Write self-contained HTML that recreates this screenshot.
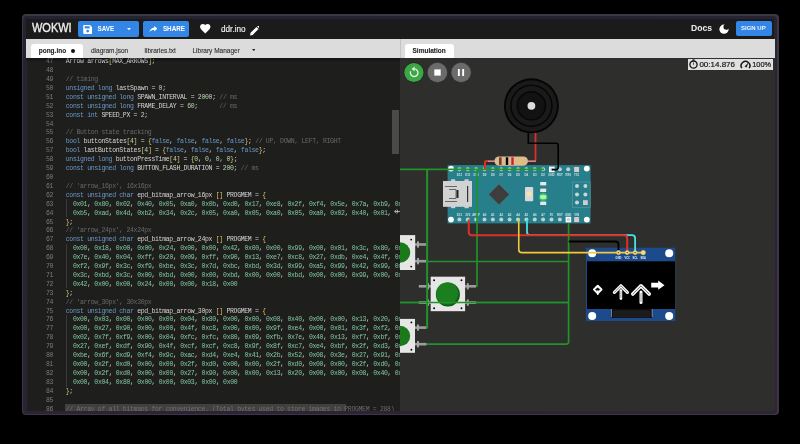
<!DOCTYPE html>
<html><head><meta charset="utf-8">
<style>
*{margin:0;padding:0;box-sizing:border-box}
html,body{width:800px;height:444px;background:#000;overflow:hidden;font-family:"Liberation Sans",sans-serif;-webkit-font-smoothing:antialiased}
#root{position:absolute;left:0;top:0;width:800px;height:444px;will-change:transform}
.a{position:absolute}
#win{position:absolute;left:21.5px;top:13.6px;width:757px;height:401.4px;background:linear-gradient(160deg,#3a3843,#3d3443);border-radius:4px}
#win2{position:absolute;left:23px;top:15.5px;width:754px;height:398px;background:linear-gradient(160deg,#252231,#2e2538);border-radius:4px}
#hdr{position:absolute;left:25.8px;top:19px;width:748.5px;height:19.6px;background:#1c1b1b}
#tabbar{position:absolute;left:25.8px;top:38.6px;width:374.2px;height:19.4px;background:#dcdcdc}
#simtabbar{position:absolute;left:400px;top:38.6px;width:374.5px;height:19.4px;background:#dcdcdc;border-left:0.8px solid #c4c4c4}
#code{position:absolute;left:25.8px;top:57.5px;width:374.2px;height:353.5px;background:#1e1e1d;overflow:hidden}
#sim{position:absolute;left:400px;top:57.5px;width:374.5px;height:353.5px;background:#2e2e2d;overflow:hidden}
.nums{position:absolute;left:0;top:0.7px;width:27.3px;text-align:right;font-family:"Liberation Mono",monospace;font-size:6.5px;letter-spacing:-0.33px;line-height:8.91px;color:#7a7a7a}
.lines{position:absolute;left:39.95px;top:0.7px;white-space:pre;font-family:"Liberation Mono",monospace;font-size:6.5px;letter-spacing:-0.33px;line-height:8.91px;color:#d4d4d4}
.lines div,.nums div{height:8.91px}
.k{color:#6a98c8}.c{color:#686868}.n{color:#b8d4b0}.h{color:#80c8a0}.b{color:#d8c460}
.tab{position:absolute;top:47px;font-size:6.5px;line-height:8px;color:#2c2c2c;white-space:nowrap;-webkit-text-stroke:0.1px #2c2c2c}
.btn{position:absolute;background:#3385e6;border-radius:2px;color:#fff;font-weight:bold;white-space:nowrap}
</style></head><body><div id="root">
<div id="win"></div>
<div id="win2"></div>
<div id="hdr"></div>
<!-- header contents -->
<div class="a" style="left:31.9px;top:21.9px;font-size:12px;line-height:13px;color:#eeeeee;-webkit-text-stroke:0.35px #eeeeee;transform:scaleX(0.915);transform-origin:left top">WOKWI</div>
<div class="btn" style="left:78px;top:21px;width:61px;height:15.5px"></div>
<svg class="a" style="left:82.8px;top:24.5px" width="9.4" height="9" viewBox="0 0 10 10"><path d="M1 0h6.5L10 2.5V9a1 1 0 0 1-1 1H1a1 1 0 0 1-1-1V1a1 1 0 0 1 1-1z" fill="#fff"/><rect x="1.6" y="1.4" width="5.6" height="2.4" fill="#3385e6"/><circle cx="5" cy="6.8" r="1.5" fill="#3385e6"/></svg>
<div class="a" style="left:97.5px;top:25.2px;font-size:6.3px;line-height:8px;font-weight:bold;color:#fff">SAVE</div>
<svg class="a" style="left:127px;top:28px" width="4" height="2.2" viewBox="0 0 4 2.2"><path d="M0 0h4L2 2.2z" fill="#fff"/></svg>
<div class="btn" style="left:143.1px;top:21px;width:46.3px;height:15.5px"></div>
<svg class="a" style="left:148.7px;top:25.8px" width="8.6" height="6.4" viewBox="0 0 9 7"><path d="M9 2.8L5.6 0v1.6C2.4 2 1 4 0 7c1.2-1.8 3-2.6 5.6-2.6V6z" fill="#fff"/></svg>
<div class="a" style="left:162.9px;top:25.2px;font-size:6.3px;line-height:8px;font-weight:bold;color:#fff">SHARE</div>
<svg class="a" style="left:200px;top:24px" width="10.5" height="9.5" viewBox="0 0 24 22"><path d="M12 22l-1.7-1.6C4.2 14.8 0 11 0 6.4 0 2.8 2.8 0 6.4 0c2.1 0 4.1 1 5.6 2.5C13.5 1 15.5 0 17.6 0 21.2 0 24 2.8 24 6.4c0 4.6-4.2 8.4-10.3 14z" fill="#fff"/></svg>
<div class="a" style="left:221px;top:24.8px;font-size:8.2px;line-height:9px;color:#f0f0f0;-webkit-text-stroke:0.15px #f0f0f0">ddr.ino</div>
<svg class="a" style="left:249.5px;top:26px" width="9.5" height="9.5" viewBox="0 0 10 10"><path d="M0 10 L0.6 7.2 L6.8 1 L9 3.2 L2.8 9.4 z" fill="#fff"/><path d="M7.5 0.3 L8.1 -0.3 Q8.5 -0.6 8.9 -0.3 L10.3 1.1 Q10.6 1.5 10.3 1.9 L9.7 2.5 z" fill="#fff"/></svg>
<div class="a" style="left:691px;top:24.3px;font-size:8.6px;line-height:9px;color:#eeeeee;font-weight:bold">Docs</div>
<svg class="a" style="left:719px;top:24px" width="10" height="10" viewBox="0 0 10 10"><defs><mask id="mm"><rect width="10" height="10" fill="#fff"/><circle cx="7.4" cy="2.8" r="3" fill="#000"/></mask></defs><circle cx="5" cy="5.2" r="4.6" fill="#fff" mask="url(#mm)"/></svg>
<div class="btn" style="left:736.2px;top:21.4px;width:35.4px;height:14.4px"></div>
<div class="a" style="left:741px;top:24.8px;font-size:6px;line-height:7px;font-weight:bold;color:#eef4ff">SIGN UP</div>

<div id="tabbar"></div>
<div class="a" style="left:31px;top:43.75px;width:52px;height:14px;background:#fff;border-radius:3px 3px 0 0"></div>
<div class="tab" style="left:38.7px;color:#222;font-weight:bold">pong.ino</div>
<div class="a" style="left:71px;top:49px;width:4.2px;height:4.2px;border-radius:50%;background:#111"></div>
<div class="tab" style="left:91px">diagram.json</div>
<div class="tab" style="left:144.5px">libraries.txt</div>
<div class="tab" style="left:192.5px">Library Manager</div>
<svg class="a" style="left:251.5px;top:49px" width="3.6" height="2.2" viewBox="0 0 4 2.2"><path d="M0 0h4L2 2.2z" fill="#222"/></svg>
<div id="simtabbar"></div>
<div class="a" style="left:404.5px;top:44px;width:49.5px;height:13.5px;background:#fff;border-radius:3px 3px 0 0"></div>
<div class="tab" style="left:412.5px;color:#222;font-weight:bold">Simulation</div>

<div id="code">
<div class="a" style="left:0;top:0;width:374px;height:4px;background:linear-gradient(rgba(0,0,0,0.45),rgba(0,0,0,0));z-index:2"></div><div class="nums"><div>47</div><div>48</div><div>49</div><div>50</div><div>51</div><div>52</div><div>53</div><div>54</div><div>55</div><div>56</div><div>57</div><div>58</div><div>59</div><div>60</div><div>61</div><div>62</div><div>63</div><div>64</div><div>65</div><div>66</div><div>67</div><div>68</div><div>69</div><div>70</div><div>71</div><div>72</div><div>73</div><div>74</div><div>75</div><div>76</div><div>77</div><div>78</div><div>79</div><div>80</div><div>81</div><div>82</div><div>83</div><div>84</div><div>85</div><div>86</div></div>
<div class="lines"><div>Arrow arrows<span class="b">[</span>MAX_ARROWS<span class="b">]</span>;</div><div></div><div><span class="c">// timing</span></div><div><span class="k">unsigned long</span> lastSpawn = <span class="n">0</span>;</div><div><span class="k">const unsigned long</span> SPAWN_INTERVAL = <span class="n">2000</span>; <span class="c">// ms</span></div><div><span class="k">const unsigned long</span> FRAME_DELAY = <span class="n">60</span>;      <span class="c">// ms</span></div><div><span class="k">const int</span> SPEED_PX = <span class="n">2</span>;</div><div></div><div><span class="c">// Button state tracking</span></div><div><span class="k">bool</span> buttonStates<span class="b">[</span><span class="n">4</span><span class="b">]</span> = <span class="b">{</span><span class="k">false</span>, <span class="k">false</span>, <span class="k">false</span>, <span class="k">false</span><span class="b">}</span>; <span class="c">// UP, DOWN, LEFT, RIGHT</span></div><div><span class="k">bool</span> lastButtonStates<span class="b">[</span><span class="n">4</span><span class="b">]</span> = <span class="b">{</span><span class="k">false</span>, <span class="k">false</span>, <span class="k">false</span>, <span class="k">false</span><span class="b">}</span>;</div><div><span class="k">unsigned long</span> buttonPressTime<span class="b">[</span><span class="n">4</span><span class="b">]</span> = <span class="b">{</span><span class="n">0</span>, <span class="n">0</span>, <span class="n">0</span>, <span class="n">0</span><span class="b">}</span>;</div><div><span class="k">const unsigned long</span> BUTTON_FLASH_DURATION = <span class="n">200</span>; <span class="c">// ms</span></div><div></div><div><span class="c">// &#x27;arrow_16px&#x27;, 16x16px</span></div><div><span class="k">const unsigned char</span> epd_bitmap_arrow_16px <span class="b">[]</span> PROGMEM = <span class="b">{</span></div><div>  <span class="h">0x01</span>, <span class="h">0x80</span>, <span class="h">0x02</span>, <span class="h">0x40</span>, <span class="h">0x05</span>, <span class="h">0xa0</span>, <span class="h">0x0b</span>, <span class="h">0xd0</span>, <span class="h">0x17</span>, <span class="h">0xe8</span>, <span class="h">0x2f</span>, <span class="h">0xf4</span>, <span class="h">0x5e</span>, <span class="h">0x7a</span>, <span class="h">0xb9</span>, <span class="h">0x9d</span></div><div>  <span class="h">0xb5</span>, <span class="h">0xad</span>, <span class="h">0x4d</span>, <span class="h">0xb2</span>, <span class="h">0x34</span>, <span class="h">0x2c</span>, <span class="h">0x05</span>, <span class="h">0xa0</span>, <span class="h">0x05</span>, <span class="h">0xa0</span>, <span class="h">0x05</span>, <span class="h">0xa0</span>, <span class="h">0x02</span>, <span class="h">0x40</span>, <span class="h">0x01</span>, </div><div><span class="b">}</span>;</div><div><span class="c">// &#x27;arrow_24px&#x27;, 24x24px</span></div><div><span class="k">const unsigned char</span> epd_bitmap_arrow_24px <span class="b">[]</span> PROGMEM = <span class="b">{</span></div><div>  <span class="h">0x00</span>, <span class="h">0x18</span>, <span class="h">0x00</span>, <span class="h">0x00</span>, <span class="h">0x24</span>, <span class="h">0x00</span>, <span class="h">0x00</span>, <span class="h">0x42</span>, <span class="h">0x00</span>, <span class="h">0x00</span>, <span class="h">0x99</span>, <span class="h">0x00</span>, <span class="h">0x01</span>, <span class="h">0x3c</span>, <span class="h">0x80</span>, <span class="h">0x02</span></div><div>  <span class="h">0x7e</span>, <span class="h">0x40</span>, <span class="h">0x04</span>, <span class="h">0xff</span>, <span class="h">0x20</span>, <span class="h">0x09</span>, <span class="h">0xff</span>, <span class="h">0x90</span>, <span class="h">0x13</span>, <span class="h">0xe7</span>, <span class="h">0xc8</span>, <span class="h">0x27</span>, <span class="h">0xdb</span>, <span class="h">0xe4</span>, <span class="h">0x4f</span>, <span class="h">0x3c</span></div><div>  <span class="h">0xf2</span>, <span class="h">0x9f</span>, <span class="h">0x3c</span>, <span class="h">0xf9</span>, <span class="h">0xbe</span>, <span class="h">0x3c</span>, <span class="h">0x7d</span>, <span class="h">0xbc</span>, <span class="h">0xbd</span>, <span class="h">0x3d</span>, <span class="h">0x99</span>, <span class="h">0xa5</span>, <span class="h">0x99</span>, <span class="h">0x42</span>, <span class="h">0x99</span>, <span class="h">0x3c</span></div><div>  <span class="h">0x3c</span>, <span class="h">0xbd</span>, <span class="h">0x3c</span>, <span class="h">0x00</span>, <span class="h">0xbd</span>, <span class="h">0x00</span>, <span class="h">0x00</span>, <span class="h">0xbd</span>, <span class="h">0x00</span>, <span class="h">0x00</span>, <span class="h">0xbd</span>, <span class="h">0x00</span>, <span class="h">0x00</span>, <span class="h">0x99</span>, <span class="h">0x00</span>, <span class="h">0x00</span></div><div>  <span class="h">0x42</span>, <span class="h">0x00</span>, <span class="h">0x00</span>, <span class="h">0x24</span>, <span class="h">0x00</span>, <span class="h">0x00</span>, <span class="h">0x18</span>, <span class="h">0x00</span></div><div><span class="b">}</span>;</div><div><span class="c">// &#x27;arrow_30px&#x27;, 30x30px</span></div><div><span class="k">const unsigned char</span> epd_bitmap_arrow_30px <span class="b">[]</span> PROGMEM = <span class="b">{</span></div><div>  <span class="h">0x00</span>, <span class="h">0x03</span>, <span class="h">0x00</span>, <span class="h">0x00</span>, <span class="h">0x00</span>, <span class="h">0x04</span>, <span class="h">0x80</span>, <span class="h">0x00</span>, <span class="h">0x00</span>, <span class="h">0x08</span>, <span class="h">0x40</span>, <span class="h">0x00</span>, <span class="h">0x00</span>, <span class="h">0x13</span>, <span class="h">0x20</span>, <span class="h">0x00</span></div><div>  <span class="h">0x00</span>, <span class="h">0x27</span>, <span class="h">0x90</span>, <span class="h">0x00</span>, <span class="h">0x00</span>, <span class="h">0x4f</span>, <span class="h">0xc8</span>, <span class="h">0x00</span>, <span class="h">0x00</span>, <span class="h">0x9f</span>, <span class="h">0xe4</span>, <span class="h">0x00</span>, <span class="h">0x01</span>, <span class="h">0x3f</span>, <span class="h">0xf2</span>, <span class="h">0x00</span></div><div>  <span class="h">0x02</span>, <span class="h">0x7f</span>, <span class="h">0xf9</span>, <span class="h">0x00</span>, <span class="h">0x04</span>, <span class="h">0xfc</span>, <span class="h">0xfc</span>, <span class="h">0x80</span>, <span class="h">0x09</span>, <span class="h">0xfb</span>, <span class="h">0x7e</span>, <span class="h">0x40</span>, <span class="h">0x13</span>, <span class="h">0xf7</span>, <span class="h">0xbf</span>, <span class="h">0x20</span></div><div>  <span class="h">0x27</span>, <span class="h">0xef</span>, <span class="h">0xdf</span>, <span class="h">0x90</span>, <span class="h">0x4f</span>, <span class="h">0xcf</span>, <span class="h">0xcf</span>, <span class="h">0xc8</span>, <span class="h">0x9f</span>, <span class="h">0x8f</span>, <span class="h">0xc7</span>, <span class="h">0xe4</span>, <span class="h">0xbf</span>, <span class="h">0x2f</span>, <span class="h">0xd3</span>, <span class="h">0xf4</span></div><div>  <span class="h">0xbe</span>, <span class="h">0x6f</span>, <span class="h">0xd9</span>, <span class="h">0xf4</span>, <span class="h">0x9c</span>, <span class="h">0xac</span>, <span class="h">0xd4</span>, <span class="h">0xe4</span>, <span class="h">0x41</span>, <span class="h">0x2b</span>, <span class="h">0x52</span>, <span class="h">0x08</span>, <span class="h">0x3e</span>, <span class="h">0x27</span>, <span class="h">0x91</span>, <span class="h">0xf0</span></div><div>  <span class="h">0x00</span>, <span class="h">0x2f</span>, <span class="h">0xd0</span>, <span class="h">0x00</span>, <span class="h">0x00</span>, <span class="h">0x2f</span>, <span class="h">0xd0</span>, <span class="h">0x00</span>, <span class="h">0x00</span>, <span class="h">0x2f</span>, <span class="h">0xd0</span>, <span class="h">0x00</span>, <span class="h">0x00</span>, <span class="h">0x2f</span>, <span class="h">0xd0</span>, <span class="h">0x00</span></div><div>  <span class="h">0x00</span>, <span class="h">0x2f</span>, <span class="h">0xd0</span>, <span class="h">0x00</span>, <span class="h">0x00</span>, <span class="h">0x27</span>, <span class="h">0x90</span>, <span class="h">0x00</span>, <span class="h">0x00</span>, <span class="h">0x13</span>, <span class="h">0x20</span>, <span class="h">0x00</span>, <span class="h">0x00</span>, <span class="h">0x08</span>, <span class="h">0x40</span>, <span class="h">0x00</span></div><div>  <span class="h">0x00</span>, <span class="h">0x04</span>, <span class="h">0x80</span>, <span class="h">0x00</span>, <span class="h">0x00</span>, <span class="h">0x03</span>, <span class="h">0x00</span>, <span class="h">0x00</span></div><div><span class="b">}</span>;</div><div></div><div><span class="c">// Array of all bitmaps for convenience. (Total bytes used to store images in PROGMEM = 288)</span></div></div>
</div>
<div id="sim"></div>
<svg class="a" style="left:0;top:0" width="800" height="444" viewBox="0 0 800 444">
<defs><clipPath id="sc"><rect x="400" y="57.5" width="374.5" height="353.5"/></clipPath>
<radialGradient id="glow"><stop offset="0" stop-color="#9dff9d"/><stop offset="0.5" stop-color="#5fe35f" stop-opacity="0.8"/><stop offset="1" stop-color="#5fe35f" stop-opacity="0"/></radialGradient>
</defs>
<g clip-path="url(#sc)">
<!-- control buttons -->
<circle cx="413.9" cy="72.5" r="10.4" fill="#1b2f1c"/>
<circle cx="413.9" cy="72.5" r="9.6" fill="#3da647"/>
<path d="M410.6 71.4 A3.8 3.8 0 1 0 414.4 68.9" fill="none" stroke="#e8f5e8" stroke-width="1.3"/>
<path d="M414.6 66.6 L414.6 71.2 L411.6 68.9 z" fill="#e8f5e8"/>
<circle cx="437.4" cy="72.5" r="10.3" fill="#3c3c3c"/>
<circle cx="437.4" cy="72.5" r="9.7" fill="#6b6b6b"/>
<rect x="434.3" y="69.4" width="6.4" height="6.2" fill="#fff"/>
<circle cx="461.1" cy="72.5" r="10.3" fill="#3c3c3c"/>
<circle cx="461.1" cy="72.5" r="9.7" fill="#6b6b6b"/>
<rect x="457.9" y="69" width="1.9" height="7" fill="#fff"/><rect x="462.2" y="69" width="1.9" height="7" fill="#fff"/>

<!-- buzzer -->
<circle cx="531.4" cy="105.8" r="27.5" fill="#050505"/>
<circle cx="531.4" cy="105.8" r="25.6" fill="#1a1a1a"/>
<circle cx="531.4" cy="105.8" r="20.5" fill="none" stroke="#070707" stroke-width="1.6"/>
<circle cx="531.4" cy="105.8" r="14" fill="#121212" stroke="#070707" stroke-width="1.6"/>
<circle cx="531.4" cy="105.8" r="3.9" fill="#dcdcdc"/>
<!-- buzzer wires -->

<path d="M535.5 133 V159.6 Q535.5 161.2 533.9 161.2 H528" fill="none" stroke="#dc3028" stroke-width="1.8"/>

<!-- green wires -->
<g fill="none" stroke="#23922a" stroke-width="1.7">
<path d="M427.2 169.3 V327.6 H415"/>
<path d="M400 302.5 H568.6"/>
<path d="M427.2 261.5 H568.6"/>
<path d="M568.6 219.6 V341.5 Q568.6 344.2 566 344.2 H415"/>
</g>

<!-- arduino board -->
<rect x="447.6" y="165.1" width="143" height="58.3" fill="#277f8b"/>
<g fill="#fff"><circle cx="451" cy="168.6" r="2.9"/><circle cx="586.8" cy="168.6" r="2.9"/><circle cx="451" cy="219.6" r="2.9"/><circle cx="586.8" cy="219.6" r="2.9"/></g>
<g id="pins" fill="#bcd3d6">
<circle cx="459.40" cy="169.3" r="2"/><circle cx="459.40" cy="219.5" r="2"/><circle cx="467.77" cy="169.3" r="2"/><circle cx="467.77" cy="219.5" r="2"/><circle cx="476.14" cy="169.3" r="2"/><circle cx="476.14" cy="219.5" r="2"/><circle cx="484.51" cy="169.3" r="2"/><circle cx="484.51" cy="219.5" r="2"/><circle cx="492.88" cy="169.3" r="2"/><circle cx="492.88" cy="219.5" r="2"/><circle cx="501.25" cy="169.3" r="2"/><circle cx="501.25" cy="219.5" r="2"/><circle cx="509.62" cy="169.3" r="2"/><circle cx="509.62" cy="219.5" r="2"/><circle cx="517.99" cy="169.3" r="2"/><circle cx="517.99" cy="219.5" r="2"/><circle cx="526.36" cy="169.3" r="2"/><circle cx="526.36" cy="219.5" r="2"/><circle cx="534.73" cy="169.3" r="2"/><circle cx="534.73" cy="219.5" r="2"/><circle cx="543.10" cy="169.3" r="2"/><circle cx="543.10" cy="219.5" r="2"/><circle cx="551.47" cy="169.3" r="2"/><circle cx="551.47" cy="219.5" r="2"/><circle cx="559.84" cy="169.3" r="2"/><circle cx="559.84" cy="219.5" r="2"/><circle cx="568.21" cy="169.3" r="2"/><circle cx="568.21" cy="219.5" r="2"/><circle cx="576.58" cy="169.3" r="2"/><circle cx="576.58" cy="219.5" r="2"/>
</g>
<!-- square pins -->
<rect x="549" y="166.6" width="5.6" height="5.6" fill="#fff"/><circle cx="551.8" cy="169.4" r="1.8" fill="#c9d5d7"/>
<rect x="574.1" y="167" width="5" height="5" fill="#d9c9c9"/>
<rect x="565.6" y="216.8" width="5.6" height="5.6" fill="#fff"/><circle cx="568.4" cy="219.6" r="1.8" fill="#c9d5d7"/>
<rect x="574.1" y="217.1" width="5" height="5" fill="#d9c9c9"/>
<!-- labels (tiny) -->
<g fill="#e6f0f0" font-family="Liberation Sans" font-size="2.9" font-weight="bold" text-anchor="middle" opacity="0.85"><text x="459.40" y="175.6">D12</text><text x="459.40" y="215.6">D13</text><text x="467.77" y="175.6">D11</text><text x="467.77" y="215.6">3V3</text><text x="476.14" y="175.6">D10</text><text x="476.14" y="215.6">AREF</text><text x="484.51" y="175.6">D9</text><text x="484.51" y="215.6">A0</text><text x="492.88" y="175.6">D8</text><text x="492.88" y="215.6">A1</text><text x="501.25" y="175.6">D7</text><text x="501.25" y="215.6">A2</text><text x="509.62" y="175.6">D6</text><text x="509.62" y="215.6">A3</text><text x="517.99" y="175.6">D5</text><text x="517.99" y="215.6">A4</text><text x="526.36" y="175.6">D4</text><text x="526.36" y="215.6">A5</text><text x="534.73" y="175.6">D3</text><text x="534.73" y="215.6">A6</text><text x="543.10" y="175.6">D2</text><text x="543.10" y="215.6">A7</text><text x="551.47" y="175.6">GND</text><text x="551.47" y="215.6">5V</text><text x="559.84" y="175.6">RST</text><text x="559.84" y="215.6">RST</text><text x="568.21" y="175.6">RX0</text><text x="568.21" y="215.6">GND</text><text x="576.58" y="175.6">TX1</text><text x="576.58" y="215.6">VIN</text></g>
<!-- usb -->
<rect x="451" y="179.3" width="4.2" height="2.6" fill="#cfcfcf"/><rect x="464.5" y="179.3" width="4.2" height="2.6" fill="#cfcfcf"/>
<rect x="451" y="205.6" width="4.2" height="2.6" fill="#cfcfcf"/><rect x="464.5" y="205.6" width="4.2" height="2.6" fill="#cfcfcf"/>
<rect x="443" y="181" width="29" height="25.8" fill="#d2d2d2"/>
<path d="M445 186.5 H457 M445 201.5 H457 M449 189.5 H456 V198.5 H449" fill="none" stroke="#666" stroke-width="1"/>
<rect x="456.5" y="190" width="2" height="8" fill="#222"/>
<rect x="467" y="186" width="1.2" height="16" fill="#333"/>
<!-- chip -->
<path d="M499 184 L509.4 194.4 L499 204.8 L488.6 194.4 z" fill="#3d3d3d" stroke="#4d6e72" stroke-width="0.8"/>
<!-- reset -->
<rect x="525" y="186.9" width="8.2" height="14.4" rx="1" fill="#d8d8d8"/>
<circle cx="529.1" cy="194" r="2.6" fill="#f0e6b0"/>
<!-- leds -->
<rect x="540.2" y="182" width="6" height="3.4" fill="#e8e8e8"/>
<rect x="540.2" y="188.6" width="6" height="3.4" fill="#e8e8e8"/>
<circle cx="543.2" cy="197" r="5" fill="url(#glow)"/>
<rect x="540.2" y="195.3" width="6" height="3.4" fill="#a8ffa8"/>
<rect x="540.2" y="201.6" width="6" height="3.4" fill="#e8e8e8"/>
<!-- icsp -->
<rect x="572.3" y="182" width="17.9" height="25.3" fill="none" stroke="#5a9ea6" stroke-width="0.6"/>
<g fill="#c9d5d7"><circle cx="577" cy="186" r="2"/><circle cx="585.4" cy="186" r="2"/><circle cx="577" cy="194.4" r="2"/><circle cx="585.4" cy="194.4" r="2"/><circle cx="577" cy="202.6" r="2"/></g>
<rect x="583" y="200.2" width="4.8" height="4.8" fill="#d9c9c9"/>

<g fill="none" stroke="#23922a" stroke-width="1.7"><path d="M398 169.3 H544"/><path d="M477 169.3 V286 H465"/></g>
<path d="M528.3 133 V143.2 H556 Q558.2 143.2 558.2 145.4 V167.6 Q558.2 169.6 556 169.6 H551.8" fill="none" stroke="#000" stroke-width="1.6"/>
<!-- resistor -->
<path d="M485 168.8 V162.5 Q485 161.2 486.3 161.2 H494" fill="none" stroke="#dc3028" stroke-width="1.8"/>
<path d="M486 161.2 H536" stroke="#bdbdbd" stroke-width="1"/>
<path d="M485 168.8 V162.5 Q485 161.2 486.3 161.2 H488" fill="none" stroke="#dc3028" stroke-width="1.8"/>
<rect x="494.4" y="156.5" width="33.6" height="9.2" rx="4.6" fill="#d8bc95"/>
<rect x="499" y="157.3" width="2.6" height="7.6" fill="#7a3f18"/>
<rect x="505.8" y="157.3" width="2.4" height="7.6" fill="#000"/>
<rect x="511.3" y="157.3" width="2.4" height="7.6" fill="#d42020"/>
<rect x="519.6" y="157.3" width="2.8" height="7.6" fill="#e6c260"/>

<!-- oled -->
<rect x="586" y="247.7" width="89.3" height="73.3" fill="#1d4a8a"/>
<g fill="#fff"><circle cx="592.2" cy="253.2" r="4"/><circle cx="669.2" cy="253.2" r="4"/><circle cx="592.2" cy="316" r="4"/><circle cx="669.2" cy="316" r="4"/></g>
<rect x="587" y="261.3" width="88" height="47.7" fill="#000"/>
<rect x="611.4" y="309" width="40.6" height="9" fill="#111"/><rect x="613" y="310.5" width="37.4" height="7" fill="#1c1c1c"/>
<rect x="611" y="309" width="0.6" height="8" fill="#bbb"/><rect x="651.8" y="309" width="0.6" height="8" fill="#bbb"/>
<!-- other wires -->
<path d="M527 219.5 V232 Q527 235.2 530.2 235.2 H632 Q635.1 235.2 635.1 238.4 V252.5" fill="none" stroke="#45e3e3" stroke-width="1.8"/>
<path d="M468.75 219.5 V232 Q468.75 235.2 472 235.2 H624 Q627.2 235.2 627.2 238.4 V252.5" fill="none" stroke="#dc3028" stroke-width="2"/>



<path d="M568.8 241.5 H615.3 Q618.5 241.5 618.5 244.7 V252.5" fill="none" stroke="#000" stroke-width="1.8"/>
<path d="M518.75 219.5 V249.5 Q518.75 252.6 521.9 252.6 H643.2" fill="none" stroke="#f2c93a" stroke-width="1.6"/>

<!-- buttons -->
<rect x="415" y="243.2" width="11" height="2.6" fill="#9c9c9c"/><rect x="417" y="241.4" width="2" height="6.2" fill="#a8a8a8"/><rect x="415" y="259.9" width="11" height="2.6" fill="#9c9c9c"/><rect x="417" y="258.09999999999997" width="2" height="6.2" fill="#a8a8a8"/><rect x="418.8" y="285.0" width="12.199999999999989" height="2.6" fill="#9c9c9c"/><rect x="427" y="283.2" width="2" height="6.2" fill="#a8a8a8"/><rect x="418.8" y="301.3" width="12.199999999999989" height="2.6" fill="#9c9c9c"/><rect x="427" y="299.5" width="2" height="6.2" fill="#a8a8a8"/><rect x="465" y="285.0" width="11.100000000000023" height="2.6" fill="#9c9c9c"/><rect x="466.8" y="283.2" width="2" height="6.2" fill="#a8a8a8"/><rect x="465" y="301.3" width="11.100000000000023" height="2.6" fill="#9c9c9c"/><rect x="466.8" y="299.5" width="2" height="6.2" fill="#a8a8a8"/><rect x="415" y="326.3" width="11.399999999999977" height="2.6" fill="#9c9c9c"/><rect x="417" y="324.5" width="2" height="6.2" fill="#a8a8a8"/><rect x="415" y="342.9" width="11.399999999999977" height="2.6" fill="#9c9c9c"/><rect x="417" y="341.09999999999997" width="2" height="6.2" fill="#a8a8a8"/>
<rect x="385" y="235.1" width="30.2" height="34.9" fill="#e6e6e6"/>
<circle cx="400" cy="252.5" r="10.2" fill="#1a7a1a"/>
<circle cx="411.2" cy="239.6" r="0.9" fill="#000"/><circle cx="411.2" cy="266.6" r="0.9" fill="#000"/>
<rect x="430.7" y="276.7" width="34.4" height="34.5" fill="#e6e6e6"/>
<circle cx="447.9" cy="294.4" r="12.6" fill="#c8e6c8"/>
<circle cx="447.9" cy="294.4" r="12" fill="#0f5a12"/>
<circle cx="447.2" cy="293.6" r="11" fill="#1c7f1f"/>
<circle cx="434.1" cy="280.2" r="0.95" fill="#000"/><circle cx="461.5" cy="280.2" r="0.95" fill="#000"/>
<circle cx="434.1" cy="308.2" r="0.95" fill="#000"/><circle cx="461.5" cy="308.2" r="0.95" fill="#000"/>
<rect x="385" y="318.9" width="30" height="33.9" fill="#e6e6e6"/>
<circle cx="400" cy="336" r="10.2" fill="#1a7a1a"/>
<circle cx="411.4" cy="322.4" r="0.95" fill="#000"/><circle cx="411.4" cy="349.7" r="0.95" fill="#000"/>
<path d="M400 302.5 H568.6" stroke="#23922a" stroke-width="1.7"/>
<path d="M427.2 169.3 V327.6" stroke="#23922a" stroke-width="1.8"/>

<g fill="#f5d9a0" stroke="#f2c93a" stroke-width="0.8"><circle cx="618.5" cy="252.6" r="2"/><circle cx="627.2" cy="252.6" r="2"/><circle cx="635.1" cy="252.6" r="2"/><circle cx="643.2" cy="252.6" r="2.2"/></g>
<g fill="#333"><circle cx="618.5" cy="252.6" r="0.7"/><circle cx="627.2" cy="252.6" r="0.7"/><circle cx="635.1" cy="252.6" r="0.7"/></g>
<g fill="#e8eef5" font-family="Liberation Sans" font-size="2.6" font-weight="bold" text-anchor="middle"><text x="618.5" y="259.2">GND</text><text x="627.2" y="259.2">VCC</text><text x="635.1" y="259.2">SCL</text><text x="643.2" y="259.2">SDA</text></g>
<!-- arrows -->
<g fill="none" stroke-linejoin="round" stroke-linecap="round">
<path d="M594 289.5 L597.75 285.8 L601.5 289.5 L597.75 293.2z" stroke="#fff" stroke-width="2"/>
<path d="M595.8 289.5 L597.75 287.6 L599.7 289.5 L597.75 291.4z" stroke="#666" stroke-width="0.7"/>
<path d="M597.75 291 V294.2" stroke="#fff" stroke-width="1.6"/>
<path d="M614.4 292.3 L620.9 285.8 L627.4 292.3" stroke="#fff" stroke-width="3.2"/>
<path d="M614.4 292.3 L620.9 285.8 L627.4 292.3" stroke="#6a6a6a" stroke-width="0.9"/>
<path d="M620.9 290.5 V298.6" stroke="#fff" stroke-width="2.6"/>
<path d="M620.9 291.5 V297.6" stroke="#777" stroke-width="0.7"/>
<path d="M632.8 294 L641 285.8 L649.2 294" stroke="#fff" stroke-width="3.6"/>
<path d="M632.8 294 L641 285.8 L649.2 294" stroke="#6a6a6a" stroke-width="1"/>
<path d="M641 292 V302.6" stroke="#fff" stroke-width="3"/>
<path d="M641 293.5 V301.5" stroke="#777" stroke-width="0.8"/>
</g>
<path d="M651.2 282.8 H658.2 V280.6 L664.5 285.2 L658.2 289.7 V287.4 H651.2 z" fill="#fff"/>
</g>
</svg>

<!-- timer -->
<div class="a" style="left:688.2px;top:58.6px;width:85.2px;height:11.6px;background:#e0e0e0"></div>
<svg class="a" style="left:689.4px;top:59.2px" width="9" height="10" viewBox="0 0 9 10"><circle cx="4.5" cy="5.6" r="3.6" fill="none" stroke="#151515" stroke-width="1.3"/><rect x="3.3" y="0.4" width="2.4" height="1" fill="#222"/><rect x="4.1" y="1" width="0.8" height="1.2" fill="#222"/><rect x="4.1" y="3.6" width="0.8" height="2.2" fill="#222"/></svg>
<div class="a" style="left:699.4px;top:60px;font-size:8px;line-height:9px;color:#151515;-webkit-text-stroke:0.2px #151515">00:14.876</div>
<svg class="a" style="left:740.4px;top:60.2px" width="11" height="9" viewBox="0 0 11 9"><path d="M1.8 8.2A4.4 4.4 0 1 1 9.2 8.2" fill="none" stroke="#151515" stroke-width="1.5"/><path d="M4.6 6.4L8.4 2.6 6.6 7.4z" fill="#151515"/></svg>
<div class="a" style="left:752.2px;top:60px;font-size:7.4px;line-height:9px;color:#151515;-webkit-text-stroke:0.2px #151515">100%</div>

<!-- indent guides & hscroll -->
<div class="a" style="left:65.6px;top:199px;width:0.7px;height:17.9px;background:#3a3a3a"></div>
<div class="a" style="left:65.6px;top:243.7px;width:0.7px;height:44.7px;background:#3a3a3a"></div>
<div class="a" style="left:65.6px;top:315.3px;width:0.7px;height:71.5px;background:#3a3a3a"></div>
<div class="a" style="left:65px;top:404.2px;width:281px;height:7.3px;background:rgba(130,130,130,0.35)"></div>
<svg class="a" style="left:393.5px;top:209px" width="6" height="5" viewBox="0 0 6 5"><path d="M0.5 2.5H6 M2.6 0.6L0.6 2.5 2.6 4.4 M3.4 0.8V4.2" fill="none" stroke="#c8c8c8" stroke-width="0.8"/></svg>
<div class="a" style="left:25.8px;top:57.5px;width:2.2px;height:353.5px;background:linear-gradient(90deg,#29253a,rgba(30,30,29,0))"></div>
<!-- scrollbar -->
<div class="a" style="left:392.4px;top:110px;width:6.8px;height:43.8px;background:#4a4a4a"></div>

</div></body></html>
